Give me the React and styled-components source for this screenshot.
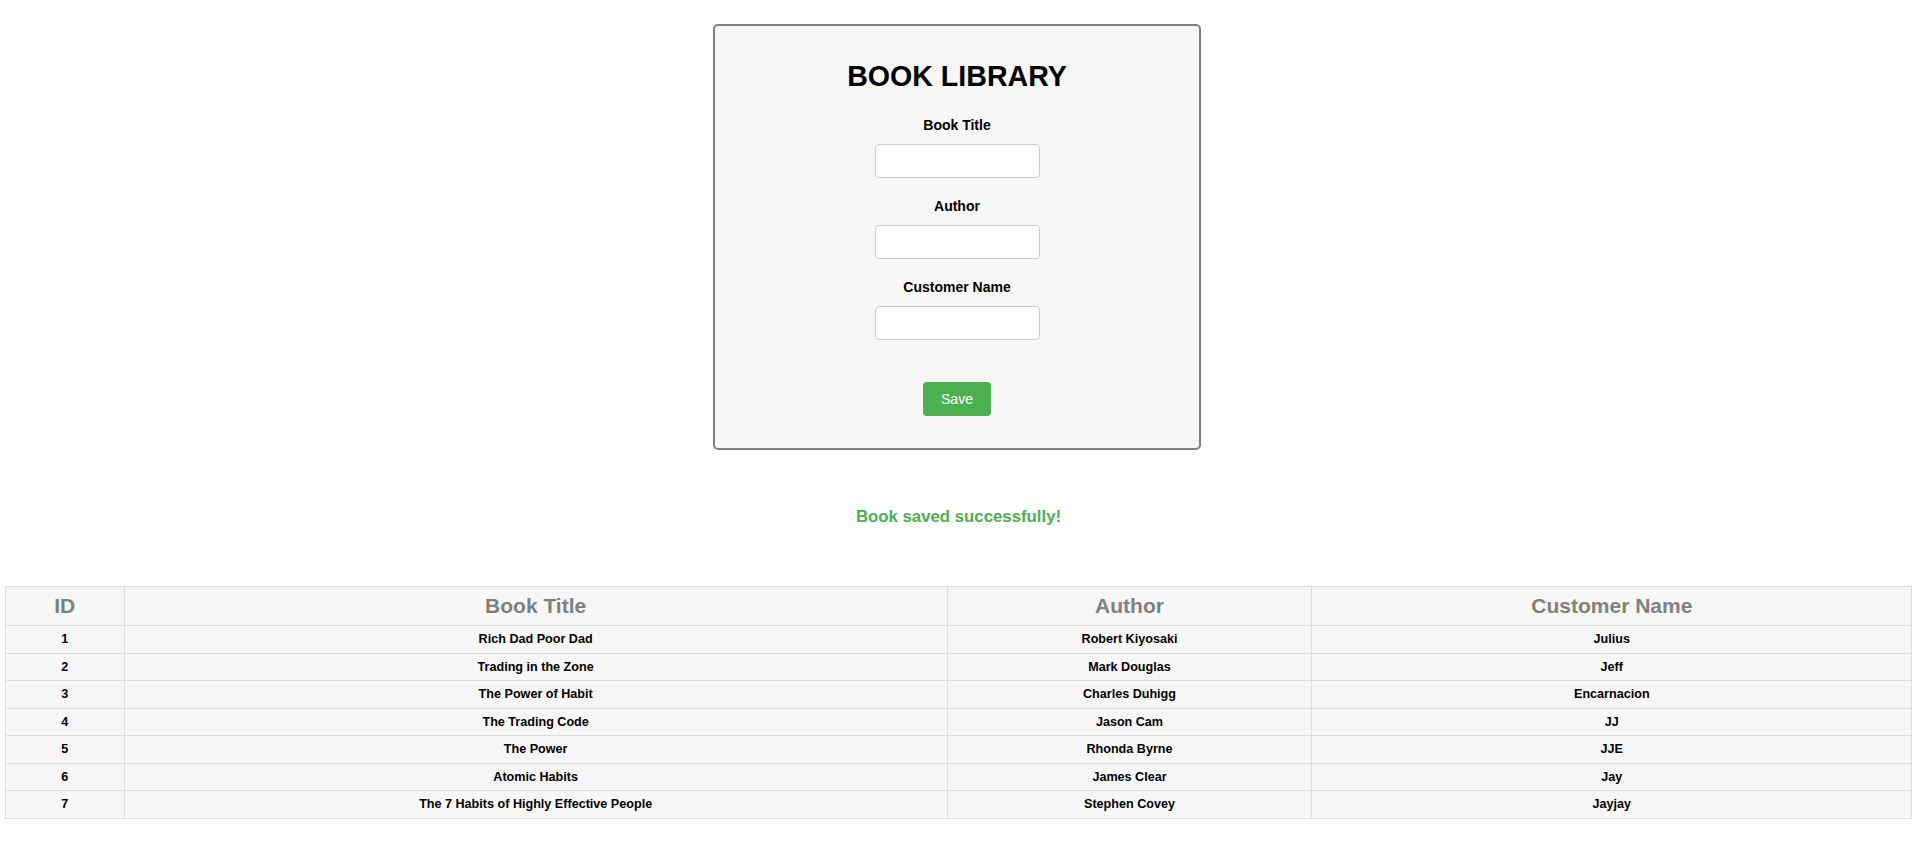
import * as React from "react"
import styled, { createGlobalStyle } from "styled-components"

const GlobalStyle = createGlobalStyle`
  body {
    margin: 0;
    background: #fff;
    font-family: "Liberation Sans", Arial, sans-serif;
    font-size: 14px;
    color: #000;
  }
`

const Page = styled.div`
  padding-top: 24px;
  display: flex;
  flex-direction: column;
  align-items: center;
`

const Card = styled.form`
  box-sizing: border-box;
  width: 488px;
  margin-right: 3px;
  padding: 34px 0 32px;
  display: flex;
  flex-direction: column;
  align-items: center;
  background: #f7f7f7;
  border: 2px solid #808080;
  border-radius: 5px;
`

const Title = styled.h1`
  margin: 0;
  font-size: 28.6px;
  line-height: 32px;
  font-weight: 700;
`

const Field = styled.div`
  display: flex;
  flex-direction: column;
  align-items: center;
  margin-top: ${props => (props.$first ? "25px" : "20px")};
`

const Label = styled.label`
  font-size: 14px;
  line-height: 16px;
  font-weight: 700;
  margin-bottom: 11px;
`

const Input = styled.input`
  box-sizing: border-box;
  width: 165px;
  height: 34px;
  background: #fff;
  border: 1px solid #ccc;
  border-radius: 4px;
  font-family: inherit;
`

const SaveButton = styled.button`
  margin-top: 42px;
  width: 68px;
  height: 34px;
  border: none;
  border-radius: 4px;
  background: #4caf50;
  color: #fff;
  font-family: inherit;
  font-size: 14px;
`

const Message = styled.p`
  margin: 57px 0 59px;
  font-size: 16.8px;
  line-height: 20px;
  font-weight: 700;
  color: #4caf50;
`

const Table = styled.table`
  width: 99.5%;
  table-layout: fixed;
  border-collapse: collapse;
  background: #f7f7f7;
  border: 1px solid #ddd;
`

const Col = styled.col`
  width: ${props => props.$w};
`

const Th = styled.th`
  padding: 7px 4px;
  border: 1px solid #ddd;
  font-size: 21px;
  line-height: 24px;
  font-weight: 700;
  color: #808080;
  text-align: center;
`

const Td = styled.td`
  padding: 6px 4px;
  border: 1px solid #ddd;
  font-size: 12.6px;
  line-height: 14.5px;
  font-weight: 700;
  text-align: center;
`

const books = [
  [1, "Rich Dad Poor Dad", "Robert Kiyosaki", "Julius"],
  [2, "Trading in the Zone", "Mark Douglas", "Jeff"],
  [3, "The Power of Habit", "Charles Duhigg", "Encarnacion"],
  [4, "The Trading Code", "Jason Cam", "JJ"],
  [5, "The Power", "Rhonda Byrne", "JJE"],
  [6, "Atomic Habits", "James Clear", "Jay"],
  [7, "The 7 Habits of Highly Effective People", "Stephen Covey", "Jayjay"],
]

const App = () => (
  <>
    <GlobalStyle />
    <Page>
      <Card onSubmit={e => e.preventDefault()}>
        <Title>BOOK LIBRARY</Title>
        <Field $first>
          <Label htmlFor="title">Book Title</Label>
          <Input id="title" />
        </Field>
        <Field>
          <Label htmlFor="author">Author</Label>
          <Input id="author" />
        </Field>
        <Field>
          <Label htmlFor="customer">Customer Name</Label>
          <Input id="customer" />
        </Field>
        <SaveButton type="submit">Save</SaveButton>
      </Card>

      <Message>Book saved successfully!</Message>

      <Table>
        <colgroup>
          <Col $w="6.24%" />
          <Col $w="43.16%" />
          <Col $w="19.14%" />
          <Col $w="31.46%" />
        </colgroup>
        <thead>
          <tr>
            <Th>ID</Th>
            <Th>Book Title</Th>
            <Th>Author</Th>
            <Th>Customer Name</Th>
          </tr>
        </thead>
        <tbody>
          {books.map(([id, title, author, customer]) => (
            <tr key={id}>
              <Td>{id}</Td>
              <Td>{title}</Td>
              <Td>{author}</Td>
              <Td>{customer}</Td>
            </tr>
          ))}
        </tbody>
      </Table>
    </Page>
  </>
)

export default App
